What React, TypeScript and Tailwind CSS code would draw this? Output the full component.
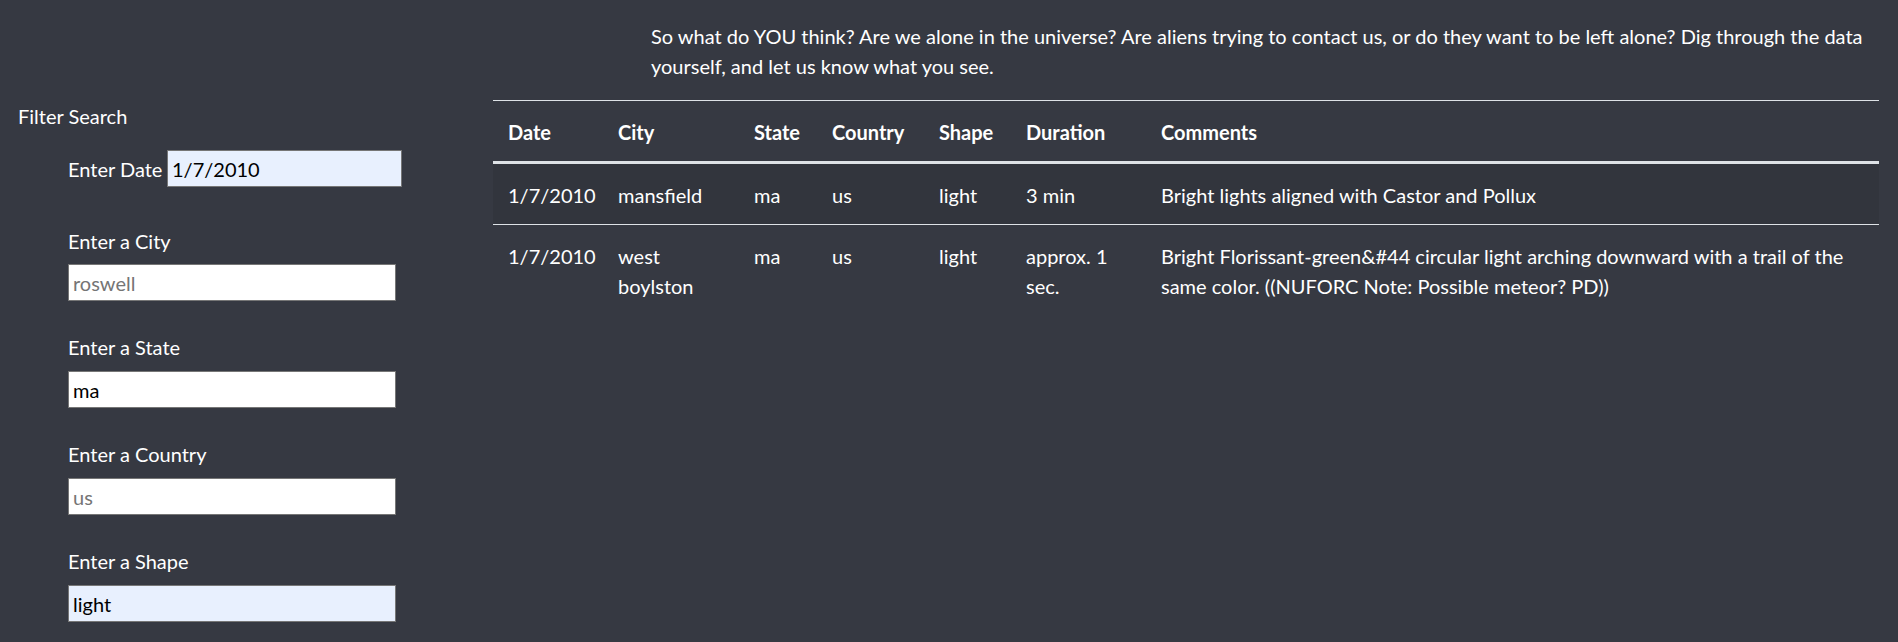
import { useState } from "react";

type Sighting = {
  datetime: string;
  city: string;
  state: string;
  country: string;
  shape: string;
  duration: string;
  comments: string;
};

const sightings: Sighting[] = [
  {
    datetime: "1/7/2010",
    city: "mansfield",
    state: "ma",
    country: "us",
    shape: "light",
    duration: "3 min",
    comments: "Bright lights aligned with Castor and Pollux",
  },
  {
    datetime: "1/7/2010",
    city: "west boylston",
    state: "ma",
    country: "us",
    shape: "light",
    duration: "approx. 1 sec.",
    comments:
      "Bright Florissant-green&#44 circular light arching downward with a trail of the same color. ((NUFORC Note: Possible meteor? PD))",
  },
];

const font = { fontFamily: "'Segoe UI', Lato, 'Noto Sans', sans-serif" };

const inputBase =
  "h-[37px] border border-[#767676] px-[4px] text-[20px] text-black placeholder:text-[#757575] outline-none";

export default function App() {
  const [date, setDate] = useState("1/7/2010");
  const [city, setCity] = useState("");
  const [state, setState] = useState("ma");
  const [country, setCountry] = useState("");
  const [shape, setShape] = useState("light");

  return (
    <div
      className="flex min-h-[642px] w-full bg-[#363942] text-white text-[20px] leading-[30px]"
      style={font}
    >
      {/* Sidebar filters */}
      <aside className="w-[493px] shrink-0 pl-[18px] pt-[101px]">
        <div>Filter Search</div>
        <ul className="pl-[50px]">
          <li className="mt-[19px] flex items-center">
            <label className="w-[99px] whitespace-nowrap">Enter Date</label>
            <input
              className={`${inputBase} w-[235px] bg-[#e8f0fe]`}
              style={font}
              value={date}
              onChange={(e) => setDate(e.target.value)}
            />
          </li>
          <li className="mt-[39px]">
            <label className="block">Enter a City</label>
            <input
              className={`${inputBase} mt-[8px] w-[328px] bg-white`}
              style={font}
              placeholder="roswell"
              value={city}
              onChange={(e) => setCity(e.target.value)}
            />
          </li>
          <li className="mt-[31px]">
            <label className="block">Enter a State</label>
            <input
              className={`${inputBase} mt-[9px] w-[328px] bg-white`}
              style={font}
              value={state}
              onChange={(e) => setState(e.target.value)}
            />
          </li>
          <li className="mt-[31px]">
            <label className="block">Enter a Country</label>
            <input
              className={`${inputBase} mt-[9px] w-[328px] bg-white`}
              style={font}
              placeholder="us"
              value={country}
              onChange={(e) => setCountry(e.target.value)}
            />
          </li>
          <li className="mt-[31px]">
            <label className="block">Enter a Shape</label>
            <input
              className={`${inputBase} mt-[9px] w-[328px] bg-[#e8f0fe]`}
              style={font}
              value={shape}
              onChange={(e) => setShape(e.target.value)}
            />
          </li>
        </ul>
      </aside>

      {/* Main content */}
      <main className="flex-1 pr-[19px] pt-[21px]">
        <p className="ml-[158px] mb-[19px]">
          So what do YOU think? Are we alone in the universe? Are aliens trying to contact
          us, or do they want to be left alone? Dig through the data yourself, and let us
          know what you see.
        </p>

        <table className="w-full table-fixed border-collapse text-left">
          <thead>
            <tr className="border-t border-[#dee2e6] border-b-[3px] border-b-[#dee2e6]">
              <th className="w-[110px] px-[15px] pt-[16px] pb-[14px] font-bold">Date</th>
              <th className="w-[136px] px-[15px] pt-[16px] pb-[14px] font-bold">City</th>
              <th className="w-[78px] px-[15px] pt-[16px] pb-[14px] font-bold">State</th>
              <th className="w-[107px] px-[15px] pt-[16px] pb-[14px] font-bold">Country</th>
              <th className="w-[87px] px-[15px] pt-[16px] pb-[14px] font-bold">Shape</th>
              <th className="w-[135px] px-[15px] pt-[16px] pb-[14px] font-bold">Duration</th>
              <th className="px-[15px] pt-[16px] pb-[14px] font-bold">Comments</th>
            </tr>
          </thead>
          <tbody>
            {sightings.map((s, i) => (
              <tr
                key={i}
                className={`align-top ${
                  i % 2 === 0 ? "bg-[#32353d] border-b border-[#dee2e6]" : ""
                }`}
              >
                <td className="px-[15px] pt-[16px] pb-[14px]">{s.datetime}</td>
                <td className="px-[15px] pt-[16px] pb-[14px]">{s.city}</td>
                <td className="px-[15px] pt-[16px] pb-[14px]">{s.state}</td>
                <td className="px-[15px] pt-[16px] pb-[14px]">{s.country}</td>
                <td className="px-[15px] pt-[16px] pb-[14px]">{s.shape}</td>
                <td className="px-[15px] pt-[16px] pb-[14px]">{s.duration}</td>
                <td className="px-[15px] pt-[16px] pb-[14px]">{s.comments}</td>
              </tr>
            ))}
          </tbody>
        </table>
      </main>
    </div>
  );
}
